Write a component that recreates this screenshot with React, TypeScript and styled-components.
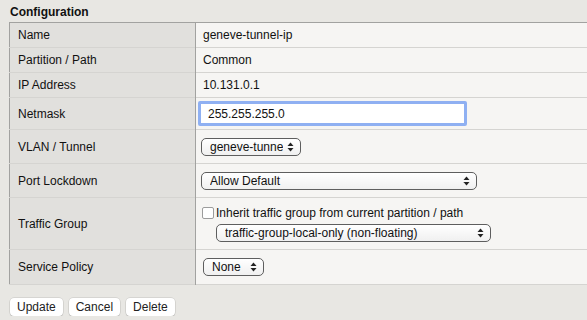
import React from 'react';
import styled, { createGlobalStyle } from 'styled-components';

const GlobalStyle = createGlobalStyle`
	html, body {
		margin: 0;
		padding: 0;
		background: #e8e7e3;
		overflow: hidden;
	}
	body {
		font-family: 'Liberation Sans', Arial, sans-serif;
		font-size: 12px;
		color: #111;
	}
`;

const Page = styled.div`
	padding: 4px 0 0 9px;
	width: 620px;
`;

const Title = styled.div`
	font-weight: bold;
	font-size: 12px;
	padding-left: 1px;
	height: 18px;
	line-height: 16px;
`;

const Table = styled.table`
	border-collapse: collapse;
	width: 620px;
	border: 1px solid #a2a2a0;
`;

const Row = styled.tr<{ h: number }>`
	height: ${(p) => p.h}px;
	border-bottom: 1px solid #d5d4d1;
`;

const Label = styled.td`
	width: 177px;
	background: #e1e0dd;
	border-right: 1px solid #a2a2a0;
	padding: 0 0 0 8px;
	vertical-align: middle;
`;

const Value = styled.td<{ pl?: number }>`
	background: #f6f5f3;
	padding: 0 0 0 ${(p) => p.pl ?? 7}px;
	vertical-align: middle;
`;

const TextInput = styled.input`
	box-sizing: border-box;
	width: 269px;
	height: 25px;
	margin-left: -5px;
	border: 3px solid #8fb0f2;
	border-radius: 2px;
	padding: 0 7px;
	font-family: 'Liberation Sans', Arial, sans-serif;
	font-size: 12px;
	color: #111;
	background: #fff;
	outline: none;
`;

const Select = styled.div<{ w: number }>`
	box-sizing: border-box;
	width: ${(p) => p.w}px;
	height: 18px;
	display: flex;
	align-items: center;
	border: 1px solid #5e5e5e;
	border-radius: 5px;
	background: linear-gradient(#ffffff, #f0f0f0);
	padding: 0 6px 0 8px;
	white-space: nowrap;
	overflow: hidden;
`;

const SelectText = styled.span`
	flex: 1;
	overflow: hidden;
	text-overflow: clip;
`;

const Arrows = () => (
	<svg width="7" height="10" viewBox="0 0 7 10" style={{ flexShrink: 0, marginLeft: 4 }}>
		<path d="M3.5 0.5 L6.5 4 L0.5 4 Z" fill="#222" />
		<path d="M3.5 9.5 L6.5 6 L0.5 6 Z" fill="#222" />
	</svg>
);

const CheckLine = styled.div`
	display: flex;
	align-items: center;
	margin-left: -6px;
	height: 15px;
	margin-bottom: 3px;
`;

const Checkbox = styled.span`
	box-sizing: border-box;
	width: 12px;
	height: 12px;
	border: 1px solid #9c9c9c;
	border-radius: 2px;
	background: #fff;
	margin-right: 2px;
`;

const Indented = styled.div`
	margin-left: 8px;
`;

const Buttons = styled.div`
	display: flex;
	gap: 6px;
	margin-top: 13px;
	padding-left: 1px;
`;

const Button = styled.button`
	height: 18px;
	padding: 0 7px;
	border: none;
	border-radius: 4px;
	background: #fff;
	box-shadow: 0 0 0 0.5px rgba(0, 0, 0, 0.15), 0 1px 1px rgba(0, 0, 0, 0.15);
	font-family: 'Liberation Sans', Arial, sans-serif;
	font-size: 12px;
	color: #222;
`;

const App: React.FC = () => {
	return (
		<>
			<GlobalStyle />
			<Page>
				<Title>Configuration</Title>
				<Table>
					<tbody>
						<Row h={25}>
							<Label>Name</Label>
							<Value>geneve-tunnel-ip</Value>
						</Row>
						<Row h={25}>
							<Label>Partition / Path</Label>
							<Value>Common</Value>
						</Row>
						<Row h={25}>
							<Label>IP Address</Label>
							<Value>10.131.0.1</Value>
						</Row>
						<Row h={32}>
							<Label>Netmask</Label>
							<Value>
								<TextInput defaultValue="255.255.255.0" />
							</Value>
						</Row>
						<Row h={34}>
							<Label>VLAN / Tunnel</Label>
							<Value pl={5}>
								<Select w={100}>
									<SelectText>geneve-tunnel</SelectText>
									<Arrows />
								</Select>
							</Value>
						</Row>
						<Row h={34}>
							<Label>Port Lockdown</Label>
							<Value pl={5}>
								<Select w={276}>
									<SelectText>Allow Default</SelectText>
									<Arrows />
								</Select>
							</Value>
						</Row>
						<Row h={52}>
							<Label>Traffic Group</Label>
							<Value pl={12}>
								<CheckLine>
									<Checkbox />
									Inherit traffic group from current partition / path
								</CheckLine>
								<Indented>
									<Select w={275}>
										<SelectText>traffic-group-local-only (non-floating)</SelectText>
										<Arrows />
									</Select>
								</Indented>
							</Value>
						</Row>
						<Row h={35}>
							<Label>Service Policy</Label>
							<Value pl={7}>
								<Select w={61}>
									<SelectText>None</SelectText>
									<Arrows />
								</Select>
							</Value>
						</Row>
					</tbody>
				</Table>
				<Buttons>
					<Button>Update</Button>
					<Button>Cancel</Button>
					<Button>Delete</Button>
				</Buttons>
			</Page>
		</>
	);
};

export default App;
